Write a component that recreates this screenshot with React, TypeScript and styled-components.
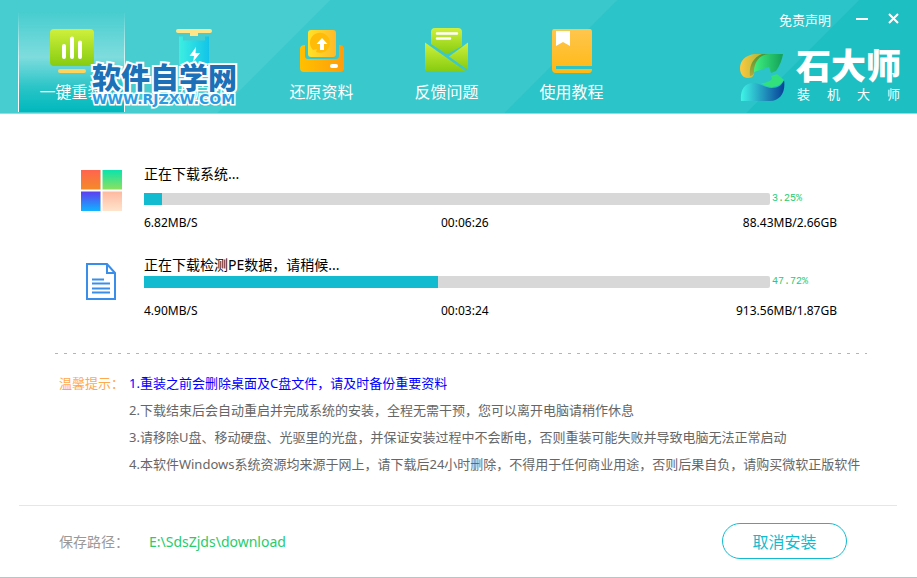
import React from "react";
import styled, { createGlobalStyle } from "styled-components";

const Global = createGlobalStyle`
  * { box-sizing: border-box; }
  body {
    margin: 0;
    background: #fff;
    font-family: "Noto Sans", "Noto Sans CJK SC", sans-serif;
    font-size: 13px;
    color: #000;
  }
  button { font: inherit; padding: 0; border: 0; background: none; color: inherit; cursor: pointer; }
`;

const Window = styled.div`
  display: flex;
  flex-direction: column;
  min-height: 100vh;
  border-bottom: 1px solid #b5c6c6;
`;

const Header = styled.header`
  display: flex;
  justify-content: space-between;
  border-bottom: 1px solid #8fdfe0;
  background: linear-gradient(135deg, #47cdcf 233px, #39c8cc 234px 436px, #2bc4c8 437px 607px, #1ebfc3 608px);
`;

const Nav = styled.nav`
  position: relative;
  display: flex;
  gap: 18px;
  padding: 12px 0 1px 18px;
`;

const Tab = styled.button<{ $active?: boolean }>`
  display: flex;
  flex-direction: column;
  align-items: center;
  gap: 5px;
  width: 107px;
  height: 100px;
  padding-top: 15px;
  color: #fff;
  font-size: 16px;
  line-height: 24px;
  border: 1px solid;
  border-width: 0 1px;
  border-image: linear-gradient(transparent, ${(p) => (p.$active ? "#fff" : "transparent")} 70%) 1;
  background: ${(p) =>
    p.$active
      ? "linear-gradient(rgba(255,255,255,0), rgba(255,255,255,.3) 45%, rgba(0,184,188,.4) 75%, #00b8bc)"
      : "none"};
`;

const Watermark = styled.div`
  position: absolute;
  left: 92px;
  top: 62px;
  color: #1b70b8;
  font-weight: 900;
  font-size: 29px;
  line-height: 32px;
  paint-order: stroke fill;
  -webkit-text-stroke: 4px #fff;
  white-space: nowrap;
`;

const WatermarkUrl = styled.div`
  font-family: "DejaVu Sans", sans-serif;
  font-weight: 700;
  font-size: 14px;
  line-height: 10px;
  color: #2a9be2;
  -webkit-text-stroke: 3px #fff;
`;

const HeaderSide = styled.div`
  display: flex;
  flex-direction: column;
  align-items: flex-end;
  gap: 16px;
  padding: 10px 17px 0 0;
  color: #fff;
`;

const Controls = styled.div`
  display: flex;
  align-items: center;
  line-height: 20px;
`;

const Disclaimer = styled.a`
  margin-right: 24px;
  color: #fff;
  text-decoration: none;
`;

const WindowButton = styled.button`
  display: flex;
  justify-content: center;
  width: 14px;
  height: 18px;
  & + & { margin-left: 17px; }
`;

const Brand = styled.div`
  display: flex;
  align-items: flex-end;
  gap: 11px;
`;

const BrandText = styled.div`
  width: 104px;
`;

const BrandName = styled.div`
  font-weight: 900;
  font-size: 35px;
  line-height: 40px;
  white-space: nowrap;
`;

const BrandSub = styled.div`
  display: flex;
  justify-content: space-between;
  padding-left: 1px;
  font-size: 13px;
  line-height: 16px;
`;

const Main = styled.main`
  display: flex;
  flex-direction: column;
  padding: 49px 80px 0;
`;

const Download = styled.section<{ $compact?: boolean }>`
  display: grid;
  grid-template-columns: 64px 1fr;
  padding-bottom: ${(p) => (p.$compact ? 32 : 21)}px;
`;

const IconCell = styled.div`
  padding-top: 7px;
`;

const Title = styled.h2<{ $compact?: boolean }>`
  margin: 0 0 ${(p) => (p.$compact ? 0 : 8)}px;
  font-weight: 400;
  font-size: 14px;
  line-height: 22px;
`;

const BarRow = styled.div`
  display: grid;
  grid-template-columns: 1fr 65px;
  align-items: center;
  column-gap: 2px;
`;

const Track = styled.div`
  height: 12px;
  border-radius: 0 2px 2px 0;
  background: #d8d8d8;
  overflow: hidden;
`;

const Fill = styled.div`
  height: 100%;
  background: #12bbcf;
`;

const Percent = styled.span`
  font-family: "Liberation Mono", monospace;
  font-size: 10px;
  line-height: 12px;
  color: #27cc6e;
`;

const Stats = styled.div<{ $compact?: boolean }>`
  display: grid;
  grid-template-columns: 3fr 2fr 2fr;
  margin-top: ${(p) => (p.$compact ? 13 : 8)}px;
  font-size: 12px;
  line-height: 20px;
  & > :last-child { text-align: right; }
`;

const Dashes = styled.hr`
  width: auto;
  height: 1px;
  margin: 0 -30px 0 -25px;
  border: 0;
  background: repeating-linear-gradient(90deg, #b4b4b4 0 3px, transparent 3px 9px);
`;

const Tips = styled.section`
  display: grid;
  grid-template-columns: 70px 1fr;
  margin: 16px -30px 0 -21px;
  font-size: 13px;
  line-height: 27px;
  white-space: nowrap;
`;

const TipsLabel = styled.h3`
  margin: 0;
  font: inherit;
  color: #ffa94d;
`;

const TipList = styled.ol`
  margin: 0;
  padding: 0;
  list-style: none;
  color: #666;
`;

const Tip = styled.li<{ $strong?: boolean }>`
  color: ${(p) => (p.$strong ? "#0000ff" : "inherit")};
`;

const Footer = styled.footer`
  display: flex;
  align-items: center;
  margin: 27px 20px 0 19px;
  padding: 17px 50px 17px 40px;
  border-top: 1px solid #e6e6e6;
  font-size: 14px;
`;

const PathLabel = styled.span`
  width: 90px;
  color: #999;
`;

const PathLink = styled.a`
  flex: 1;
  color: #27cc6e;
  text-decoration: none;
`;

const Cancel = styled.button`
  width: 125px;
  height: 36px;
  border: 1px solid #12bbcf;
  border-radius: 18px;
  color: #12bbcf;
  font-size: 16px;
`;

const Gradient = ({ id, from, to, flat }: { id: string; from: string; to: string; flat?: boolean }) => (
  <linearGradient id={id} x1="0" y1="0" x2={flat ? "1" : "0"} y2={flat ? "0" : "1"}>
    <stop stopColor={from} />
    <stop offset="1" stopColor={to} />
  </linearGradient>
);

const ReinstallIcon = () => (
  <svg width="48" height="48" viewBox="0 0 48 48" aria-hidden="true">
    <defs><Gradient id="lime" from="#d0f03c" to="#85cc10" /></defs>
    <rect x="2" y="2" width="44" height="37" rx="4" fill="url(#lime)" />
    <path d="M16 19v11M24 11.500v18.500M32 15.500v14.500" stroke="#fff" strokeWidth="4" strokeLinecap="round" />
    <rect x="10" y="42" width="28" height="4" rx="2" fill="#ffd45c" />
  </svg>
);

const UsbIcon = () => (
  <svg width="48" height="48" viewBox="0 0 48 48" aria-hidden="true">
    <defs><Gradient id="aqua" from="#3deee2" to="#13c4e8" flat /></defs>
    <rect x="3" y="2" width="36" height="4" rx="2" fill="#ffe58a" />
    <path d="M17 5h8v4h-8z" fill="#ffe58a" />
    <path d="M6 9.500h4v4h22v-4h4V36q0 8-8 8H14q-8 0-8-8z" fill="url(#aqua)" />
    <path d="M23 20l-6.500 9h4.500l-1 6 7-9h-4.500z" fill="#fff" />
  </svg>
);

const RestoreIcon = () => (
  <svg width="48" height="48" viewBox="0 0 48 48" aria-hidden="true">
    <defs>
      <Gradient id="tray" from="#ffc000" to="#ff9d0c" flat />
      <Gradient id="sheet" from="#ffe228" to="#ffb92b" flat />
    </defs>
    <path d="M2 22q0-4 5-4v11q0 3 3 3h28q3 0 3-3V18q5 0 5 4v19q0 4-4 4H6q-4 0-4-4z" fill="url(#tray)" />
    <rect x="10" y="3" width="28" height="27" rx="3" fill="url(#sheet)" />
    <path d="M15 23a10 10 0 1 1 3 2l1-3z" fill="#ffbb08" />
    <path d="M24 11l5.500 6H26v6h-4v-6h-3.500z" fill="#fff" />
    <rect x="32" y="37" width="8" height="4" rx="2" fill="#fff" />
  </svg>
);

const FeedbackIcon = () => (
  <svg width="48" height="48" viewBox="0 0 48 48" aria-hidden="true">
    <path d="M8 5q0-4 4-4h23q4 0 4 4v14L24 27.500 8 17z" fill="url(#lime)" />
    <path d="M2 15.500L43 44.500H5q-3 0-3-3z" fill="url(#lime)" />
    <path d="M45 15.500V43L26 29.500z" fill="url(#lime)" />
    <path d="M14 6.500h20M14 11.500h13" stroke="#fff" strokeWidth="2.500" strokeLinecap="round" />
  </svg>
);

const TutorialIcon = () => (
  <svg width="48" height="48" viewBox="0 0 48 48" aria-hidden="true">
    <defs><Gradient id="book" from="#ffc64f" to="#ffb913" /></defs>
    <path d="M6 2h36q2 0 2 3v34H8v3h36q0 4-3 4H8q-4 0-4-4V5q0-3 2-3z" fill="url(#book)" />
    <path d="M8 4h14v15l-7-4-7 4z" fill="#fff" />
  </svg>
);

const BrandLogo = () => (
  <svg width="45" height="49" viewBox="0 0 45 49" aria-hidden="true">
    <defs>
      <Gradient id="gold" from="#ffc83d" to="#5aa83c" flat />
      <Gradient id="band" from="#45983a" to="#b4a83a" />
      <Gradient id="leaf" from="#3ff07f" to="#12a05a" flat />
      <Gradient id="sea" from="#3ff5e6" to="#073f98" flat />
    </defs>
    <path d="M43 1H15C5 2 0 8 0 15c0 6 3 10 8 10 3 0 5-1 6-4C15 10 22 4 43 1z" fill="url(#gold)" />
    <path d="M32 1H22C12 5 9 14 10 23q3 0 4-3C15 9 20 3 32 1z" fill="url(#band)" />
    <path d="M43 1H30C20 1 14 9 14 19l15-5 2 6 5-2C40 12 42 7 43 1z" fill="url(#leaf)" />
    <path d="M1 48C0 38 4 30 13 30c7 0 12 5 19 5 6 0 10-3 12-8 2 12-4 21-14 21z" fill="url(#sea)" />
    <path d="M31 23l6-2 7 6c-3 5-8 7-13 7-4 0-8-2-10-4q7 0 11-4z" fill="#32e07c" />
  </svg>
);

const WindowsIcon = () => (
  <svg width="44" height="44" viewBox="0 0 44 44" aria-hidden="true">
    <defs>
      <Gradient id="red" from="#ff644f" to="#f38b29" />
      <Gradient id="green" from="#0be4ab" to="#8ee05e" />
      <Gradient id="blue" from="#5d3df0" to="#10b5ff" />
      <Gradient id="peach" from="#fdb9a0" to="#ffe4cc" />
    </defs>
    <path d="M1 0h19.500v19.500H1z" fill="url(#red)" />
    <path d="M22.500 0H42v19.500H22.500z" fill="url(#green)" />
    <path d="M1 21.500h19.500V41H1z" fill="url(#blue)" />
    <path d="M22.500 21.500H42V41H22.500z" fill="url(#peach)" />
  </svg>
);

const DocumentIcon = () => (
  <svg width="44" height="44" viewBox="0 0 44 44" fill="none" stroke="#3a8eea" aria-hidden="true">
    <path d="M7 3h20l8 9v26H7z" strokeWidth="2" />
    <path d="M27 3v9h8" strokeWidth="2" />
    <path d="M12 18.500h12M12 22.500h18M12 27.500h18M12 31.500h18" strokeWidth="2" />
  </svg>
);

const tabs = [
  { label: "一键重装", Icon: ReinstallIcon },
  { label: "U盘启动", Icon: UsbIcon },
  { label: "还原资料", Icon: RestoreIcon },
  { label: "反馈问题", Icon: FeedbackIcon },
  { label: "使用教程", Icon: TutorialIcon },
];

const downloads = [
  { title: "正在下载系统...", percent: "3.25%", filled: 2.9, speed: "6.82MB/S", time: "00:06:26", size: "88.43MB/2.66GB", Icon: WindowsIcon },
  { title: "正在下载检测PE数据，请稍候...", percent: "47.72%", filled: 47, speed: "4.90MB/S", time: "00:03:24", size: "913.56MB/1.87GB", Icon: DocumentIcon, compact: true },
];

const tips = [
  "1.重装之前会删除桌面及C盘文件，请及时备份重要资料",
  "2.下载结束后会自动重启并完成系统的安装，全程无需干预，您可以离开电脑请稍作休息",
  "3.请移除U盘、移动硬盘、光驱里的光盘，并保证安装过程中不会断电，否则重装可能失败并导致电脑无法正常启动",
  "4.本软件Windows系统资源均来源于网上，请下载后24小时删除，不得用于任何商业用途，否则后果自负，请购买微软正版软件",
];

export default function App() {
  return (
    <Window>
      <Global />
      <Header>
        <Nav>
          {tabs.map(({ label, Icon }, i) => (
            <Tab key={label} $active={i === 0}>
              <Icon />
              {label}
            </Tab>
          ))}
          <Watermark>
            软件自学网
            <WatermarkUrl>WWW.RJZXW.COM</WatermarkUrl>
          </Watermark>
        </Nav>
        <HeaderSide>
          <Controls>
            <Disclaimer href="#disclaimer">免责声明</Disclaimer>
            <WindowButton aria-label="最小化">
              <svg width="14" height="16" viewBox="0 0 14 16" stroke="#fff" strokeWidth="2"><path d="M1 8h12" /></svg>
            </WindowButton>
            <WindowButton aria-label="关闭">
              <svg width="14" height="16" viewBox="0 0 14 16" stroke="#fff" strokeWidth="2"><path d="M3 3l9 9M12 3l-9 9" /></svg>
            </WindowButton>
          </Controls>
          <Brand>
            <BrandLogo />
            <BrandText>
              <BrandName>石大师</BrandName>
              <BrandSub>
                {["装", "机", "大", "师"].map((c) => <span key={c}>{c}</span>)}
              </BrandSub>
            </BrandText>
          </Brand>
        </HeaderSide>
      </Header>
      <Main>
        {downloads.map(({ title, percent, filled, speed, time, size, Icon, compact }) => (
          <Download key={title} $compact={compact}>
            <IconCell><Icon /></IconCell>
            <div>
              <Title $compact={compact}>{title}</Title>
              <BarRow>
                <Track role="progressbar" aria-label={title} aria-valuenow={filled}>
                  <Fill style={{ width: `${filled}%` }} />
                </Track>
                <Percent>{percent}</Percent>
              </BarRow>
              <Stats $compact={compact}>
                <span>{speed}</span>
                <span>{time}</span>
                <span>{size}</span>
              </Stats>
            </div>
          </Download>
        ))}
        <Dashes />
        <Tips>
          <TipsLabel>温馨提示：</TipsLabel>
          <TipList>
            {tips.map((tip, i) => <Tip key={tip} $strong={i === 0}>{tip}</Tip>)}
          </TipList>
        </Tips>
      </Main>
      <Footer>
        <PathLabel>保存路径：</PathLabel>
        <PathLink href="#download">E:\SdsZjds\download</PathLink>
        <Cancel>取消安装</Cancel>
      </Footer>
    </Window>
  );
}
